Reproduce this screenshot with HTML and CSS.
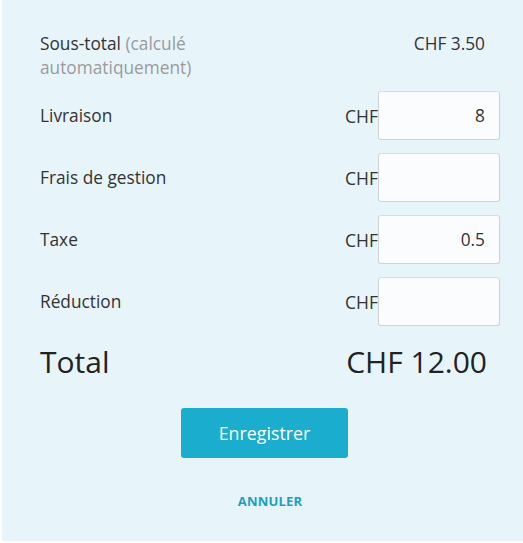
FILE: index.html
```html
<!DOCTYPE html>
<html lang="fr">
<head>
<meta charset="utf-8">
<link rel="stylesheet" href="styles.css">
</head>
<body>
<div class="panel">
  <div class="row row-sub">
    <div class="label label-sub">Sous-total <span class="muted">(calculé automatiquement)</span></div>
    <div class="sub-value">CHF 3.50</div>
  </div>
  <div class="row">
    <div class="label">Livraison</div>
    <div class="field"><span class="cur">CHF</span><input class="amount" type="text" value="8"></div>
  </div>
  <div class="row">
    <div class="label">Frais de gestion</div>
    <div class="field"><span class="cur">CHF</span><input class="amount" type="text" value=""></div>
  </div>
  <div class="row">
    <div class="label">Taxe</div>
    <div class="field"><span class="cur">CHF</span><input class="amount" type="text" value="0.5"></div>
  </div>
  <div class="row">
    <div class="label">Réduction</div>
    <div class="field"><span class="cur">CHF</span><input class="amount" type="text" value=""></div>
  </div>
  <div class="total">
    <div>Total</div>
    <div class="total-value">CHF 12.00</div>
  </div>
  <div class="actions">
    <button class="save" type="button">Enregistrer</button>
    <a class="cancel" href="#">ANNULER</a>
  </div>
</div>
</body>
</html>
```
FILE: styles.css
```css
html, body {
  margin: 0;
  padding: 0;
  background: #ffffff;
}
body {
  font-family: "Open Sans", "DejaVu Sans", sans-serif;
  color: #333333;
}
.panel {
  margin-left: 2px;
  height: 541px;
  box-sizing: border-box;
  background: #e7f5fb;
  padding: 32px 23px 0 38px;
  display: flex;
  flex-direction: column;
}
.row {
  display: flex;
  align-items: center;
  justify-content: space-between;
  margin-bottom: 13px;
}
.row-sub {
  align-items: flex-start;
  margin-bottom: 11px;
}
.label {
  font-size: 17.3px;
  line-height: 24px;
  color: #333333;
}
.label-sub {
  width: 180px;
}
.muted {
  color: #9a9a9a;
}
.sub-value {
  font-size: 17.3px;
  line-height: 24px;
  padding-right: 15px;
  color: #333333;
}
.field {
  display: flex;
  align-items: center;
}
.cur {
  font-size: 17.5px;
  color: #333333;
}
.amount {
  width: 122px;
  height: 49px;
  box-sizing: border-box;
  border: 1px solid #cfd3d6;
  border-top-color: #d9dcde;
  border-radius: 3px;
  background: #fafcfd;
  text-align: right;
  padding: 0 14px 0 8px;
  font-family: "Open Sans", "DejaVu Sans", sans-serif;
  font-size: 17.3px;
  color: #333333;
  outline: none;
}
.total {
  display: flex;
  justify-content: space-between;
  align-items: center;
  font-size: 30px;
  line-height: 38px;
  color: #222222;
  margin-top: 4px;
  padding-right: 13px;
}
.actions {
  display: flex;
  flex-direction: column;
  align-items: center;
  margin: 27px -23px 0 -38px;
  padding-left: 4px;
}
.save {
  width: 167px;
  height: 50px;
  border: none;
  border-radius: 3px;
  background: #1badcd;
  color: #ffffff;
  font-family: "Open Sans", "DejaVu Sans", sans-serif;
  font-size: 17.8px;
  cursor: pointer;
}
.cancel {
  margin-top: 35px;
  margin-left: 11px;
  font-size: 13px;
  line-height: 17px;
  font-weight: 700;
  color: #1a9fc7;
  text-decoration: none;
  letter-spacing: 0.2px;
}
```
